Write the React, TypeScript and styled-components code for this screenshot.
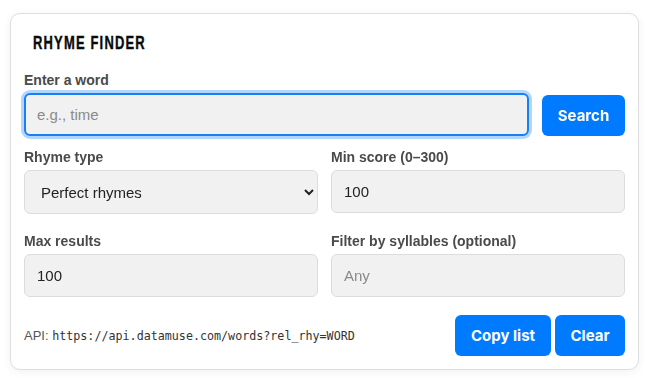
import React from "react";
import styled, { createGlobalStyle } from "styled-components";

const Global = createGlobalStyle`
  html, body { margin: 0; padding: 0; background: #ffffff; }
  body { font-family: "Liberation Sans", Arial, sans-serif; }
  * { box-sizing: border-box; }
`;

const Page = styled.div`
  padding: 13px 8px 8px 10px;
`;

const Card = styled.div`
  background: #fff;
  border: 1px solid #dedede;
  border-radius: 10px;
  box-shadow: 0 2px 10px rgba(0, 0, 0, 0.06);
  padding: 19px 13px 13px 13px;
  display: flex;
  flex-direction: column;
`;

const Title = styled.h2`
  margin: 0 0 19px;
  padding-left: 9px;
  font-family: "Liberation Sans", Arial, sans-serif;
  font-weight: 700;
  font-size: 18.5px;
  line-height: 20px;
  letter-spacing: 1.7px;
  color: #0a0a0a;
`;

const TitleText = styled.span`
  display: inline-block;
  transform: scaleX(0.7);
  transform-origin: left center;
  white-space: nowrap;
  -webkit-text-stroke: 0.4px #0a0a0a;
`;

const Label = styled.label`
  display: block;
  font-size: 14px;
  line-height: 17px;
  font-weight: 700;
  color: #4a4a4a;
  margin-bottom: 4px;
`;

const WordSection = styled.div`
  margin-bottom: 13px;
`;

const WordRow = styled.div`
  display: flex;
  align-items: flex-end;
  gap: 13px;
`;

const Field = styled.input<{ $focused?: boolean }>`
  width: 100%;
  height: 43px;
  padding: 0 12px;
  font-family: "Liberation Sans", Arial, sans-serif;
  font-size: 15px;
  color: #222;
  background: #f1f1f1;
  border: ${(p) => (p.$focused ? "2px solid #1a7ff5" : "1px solid #dcdcdc")};
  padding-left: ${(p) => (p.$focused ? "11px" : "12px")};
  border-radius: 6px;
  outline: none;
  box-shadow: ${(p) => (p.$focused ? "0 0 0 3px rgba(0, 123, 255, 0.3)" : "none")};
  &::placeholder { color: #8a8a8a; }
`;

const WordInput = styled(Field)`
  flex: 1;
`;

const Select = styled.select`
  width: 100%;
  height: 44px;
  padding: 0 12px;
  font-family: "Liberation Sans", Arial, sans-serif;
  font-size: 15px;
  color: #222;
  background: #f1f1f1;
  border: 1px solid #dcdcdc;
  border-radius: 6px;
  outline: none;
`;

const Grid = styled.div`
  display: grid;
  grid-template-columns: 1fr 1fr;
  column-gap: 13px;
  row-gap: 19px;
`;

const Button = styled.button<{ $w: number }>`
  width: ${(p) => p.$w}px;
  height: 41px;
  padding: 0;
  border: none;
  border-radius: 6px;
  background: #007bff;
  color: #fff;
  font-family: Inter, "Liberation Sans", sans-serif;
  font-weight: 700;
  font-size: 15px;
  cursor: pointer;
  flex-shrink: 0;
`;

const Footer = styled.div`
  margin-top: 18px;
  display: flex;
  align-items: center;
  justify-content: space-between;
`;

const Api = styled.div`
  font-size: 13px;
  color: #555;
`;

const Code = styled.code`
  font-family: "DejaVu Sans Mono", "Liberation Mono", monospace;
  font-size: 11.7px;
  color: #333;
`;

const Actions = styled.div`
  display: flex;
  gap: 4px;
`;

export default function App() {
  return (
    <>
      <Global />
      <Page>
        <Card>
          <Title>
            <TitleText>RHYME FINDER</TitleText>
          </Title>
          <WordSection>
            <Label htmlFor="word">Enter a word</Label>
            <WordRow>
              <WordInput id="word" $focused autoFocus placeholder="e.g., time" />
              <Button $w={83}>Search</Button>
            </WordRow>
          </WordSection>
          <Grid>
            <div>
              <Label>Rhyme type</Label>
              <Select defaultValue="perfect">
                <option value="perfect">Perfect rhymes</option>
                <option value="near">Near rhymes</option>
              </Select>
            </div>
            <div>
              <Label>Min score (0–300)</Label>
              <Field defaultValue="100" />
            </div>
            <div>
              <Label>Max results</Label>
              <Field defaultValue="100" />
            </div>
            <div>
              <Label>Filter by syllables (optional)</Label>
              <Field placeholder="Any" />
            </div>
          </Grid>
          <Footer>
            <Api>
              API: <Code>https://api.datamuse.com/words?rel_rhy=WORD</Code>
            </Api>
            <Actions>
              <Button $w={96}>Copy list</Button>
              <Button $w={70}>Clear</Button>
            </Actions>
          </Footer>
        </Card>
      </Page>
    </>
  );
}
